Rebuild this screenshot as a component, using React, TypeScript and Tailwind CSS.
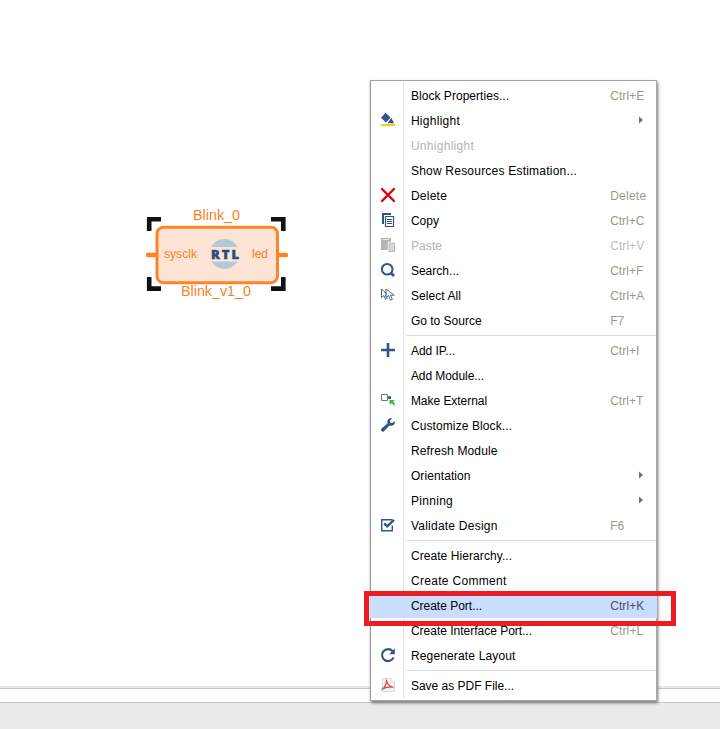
import React from 'react';

type Entry = {
  label: string;
  width: number;
  keys?: string;
  icon?: React.ReactNode;
  submenu?: boolean;
  disabled?: boolean;
  active?: boolean;
};

const navy = '#34528b';

const HighlightIcon = () => (
  <g>
    <path d="M5.5 .8 10.6 5.6 6 10.6 1 5.8Z" fill={navy} />
    <path d="M11.4 5.8 14 11.2 7.6 11.2Z" fill={navy} />
    <path d="M1 13h14" stroke="#ffc90e" strokeWidth="2" />
  </g>
);
const DeleteIcon = () => <path d="M2 2 14 14M14 2 2 14" stroke="#e80000" strokeWidth="2.4" strokeLinecap="round" fill="none" />;
const CopyIcon = () => (
  <g fill="none" stroke={navy}>
    <path d="M3 1v11M2 2h9" strokeWidth="2" />
    <path d="M5.5 4.5h8v10h-8z" fill="#fff" strokeWidth="1.2" />
    <path d="M7 7.5h5M7 9.5h5M7 11.5h5" />
  </g>
);
const PasteIcon = () => (
  <g>
    <path d="M1 1h10v12H1z" fill="#b5b5b5" />
    <path d="M3 2.5h6" stroke="#e9e9e9" />
    <path d="M7.8 4.8h7.2v10H7.8z" fill="#fff" />
    <path d="M9 6h5.5v8.5H9z" fill="#d6d6d6" stroke="#bcbcbc" />
  </g>
);
const SearchIcon = () => (
  <g fill="none" stroke={navy}>
    <circle cx="7.2" cy="7.2" r="5.3" strokeWidth="2" />
    <path d="M11.2 11.2 14 14" strokeWidth="3" />
  </g>
);
const SelectIcon = () => (
  <g fill="#fff" stroke="#4c6796" strokeWidth="1">
    <path d="M1.5 2v8.5l2.4-1.9 1.6 3.7 1.6-.8L5.5 8h2.8Z" />
    <path d="M6 2v8.7l2.5-2.1 2 4.6 1.9-.9-2-4.1h3.8Z" />
    <path d="M4 4.5 7.2 7.6" />
  </g>
);
const PlusIcon = () => <path d="M8 1v14M1 8h14" stroke={navy} strokeWidth="2.6" />;
const ExternalIcon = () => (
  <g>
    <path d="M1.5 2.5h6v6h-6z" fill="none" stroke="#61799f" />
    <path d="M7.5 5.5h1" stroke={navy} />
    <path d="M8.2 4.2h2.8v2.8H8.2z" fill={navy} />
    <path d="M9.5 8h5.2l-1.6 1.7c1.2 1 1.8 2 1.9 4.3-1.1-1.1-2.2-2-3.5-2.7L9.8 13Z" fill="#32b44a" />
  </g>
);
const WrenchIcon = () => (
  <path d="M14.8 4.2 12.2 6.1 10.3 5.6 9.8 3.8 12.3 1.4C9.6.5 7.1 2.3 7.3 5.1L7.5 6.4 1.4 11.6C.1 13.2 2.2 15.8 4 14.2L9.2 8.7C12.5 9.3 15.5 7.7 14.8 4.2Z" fill={navy} />
);
const ValidateIcon = () => (
  <g fill="none" stroke={navy}>
    <path d="M12.3 2.7H1.7v11h10.6V8.5" strokeWidth="1.4" />
    <path d="M4.2 6.4 7.2 9.4 14 2.8" strokeWidth="2.3" />
  </g>
);
const RefreshIcon = () => (
  <g>
    <path d="M12.6 4.2A6 6 0 1 0 13.6 10.4" fill="none" stroke={navy} strokeWidth="2.1" />
    <path d="M14.8 1.6V7.2H9.2Z" fill={navy} />
  </g>
);
const PdfIcon = () => (
  <g>
    <path d="M2.5 1.5h8.5l3.5 3.5v9.5h-12z" fill="#f2f2f2" stroke="#dcdcdc" />
    <path d="M11 1.5V5h3.5" fill="#fff" stroke="#cfcfcf" strokeWidth=".7" />
    <path d="M2 12.6C4.2 10.8 6.4 7.6 6.4 3.2M6.4 3.2C7 6.6 8.6 9.2 13 10.2M2.6 12C5 10.4 8.6 9.6 13 10.2" fill="none" stroke="#dc5454" strokeWidth="1.3" strokeLinecap="round" />
  </g>
);

const groups: Entry[][] = [
  [
    { label: 'Block Properties...', width: 99, keys: 'Ctrl+E' },
    { label: 'Highlight', width: 50, icon: <HighlightIcon />, submenu: true },
    { label: 'Unhighlight', width: 64, disabled: true },
    { label: 'Show Resources Estimation...', width: 167 },
    { label: 'Delete', width: 37, keys: 'Delete', icon: <DeleteIcon /> },
    { label: 'Copy', width: 29, keys: 'Ctrl+C', icon: <CopyIcon /> },
    { label: 'Paste', width: 32, keys: 'Ctrl+V', icon: <PasteIcon />, disabled: true },
    { label: 'Search...', width: 49, keys: 'Ctrl+F', icon: <SearchIcon /> },
    { label: 'Select All', width: 51, keys: 'Ctrl+A', icon: <SelectIcon /> },
    { label: 'Go to Source', width: 71.5, keys: 'F7' },
  ],
  [
    { label: 'Add IP...', width: 45, keys: 'Ctrl+I', icon: <PlusIcon /> },
    { label: 'Add Module...', width: 74, },
    { label: 'Make External', width: 77, keys: 'Ctrl+T', icon: <ExternalIcon /> },
    { label: 'Customize Block...', width: 102, icon: <WrenchIcon /> },
    { label: 'Refresh Module', width: 87.5 },
    { label: 'Orientation', width: 60.5, submenu: true },
    { label: 'Pinning', width: 43, submenu: true },
    { label: 'Validate Design', width: 87.5, keys: 'F6', icon: <ValidateIcon /> },
  ],
  [
    { label: 'Create Hierarchy...', width: 102 },
    { label: 'Create Comment', width: 96.5 },
    { label: 'Create Port...', width: 72, keys: 'Ctrl+K', active: true },
    { label: 'Create Interface Port...', width: 122, keys: 'Ctrl+L' },
    { label: 'Regenerate Layout', width: 105.5, icon: <RefreshIcon /> },
  ],
  [{ label: 'Save as PDF File...', width: 104, icon: <PdfIcon /> }],
];

function Label({ text, width }: { text: string; width: number }) {
  const ref = React.useRef<HTMLSpanElement>(null);
  const [spacing, setSpacing] = React.useState(0);
  React.useLayoutEffect(() => {
    if (ref.current) setSpacing((width - 0.8 - ref.current.getBoundingClientRect().width) / text.length);
  }, [text, width]);
  return (
    <span ref={ref} className="whitespace-pre" style={{ letterSpacing: spacing }}>
      {text}
    </span>
  );
}

const keyWidths: Record<string, number> = { 'Ctrl+I': 30, 'Ctrl+L': 34, 'Ctrl+F': 34, 'Ctrl+T': 34, Delete: 37, F6: 15, F7: 15 };

function Row({ item }: { item: Entry }) {
  const tone = item.disabled ? 'text-[#b4b4b4]' : 'text-black';
  const keyTone = item.active ? 'text-[#4e5260]' : item.disabled ? 'text-[#bcbcbc]' : 'text-[#9a9a8c]';
  return (
    <div className={`flex h-[25px] items-center ${item.active ? '-mx-px bg-[#c9ddfd] px-px' : ''}`}>
      <div className={`flex h-full w-[33px] items-start border-r pl-[9px] pt-1 ${item.active ? 'border-[#c9ddfd]' : 'border-[#e3e3e3]'}`}>
        {item.icon && <svg width="16" height="16" viewBox="0 0 16 16">{item.icon}</svg>}
      </div>
      <div className={`flex w-[199px] pl-[7px] pt-[2px] ${tone}`}><Label text={item.label} width={item.width} /></div>
      <div className={`flex w-[54px] items-center pl-[8px] ${item.keys ? 'pt-[2px]' : ''} ${keyTone}`}>
        {item.keys && <Label text={item.keys} width={keyWidths[item.keys] ?? 35} />}
        {item.submenu && <svg className="mb-px ml-[28px]" width="6" height="8" viewBox="0 0 6 8"><path d="M1 0.5 5 4 1 7.5Z" fill="#707070" /></svg>}
      </div>
    </div>
  );
}

function Block() {
  return (
    <svg className="absolute left-[140px] top-[200px]" width="150" height="105" viewBox="0 0 150 105" fontFamily="Liberation Sans, Arial, sans-serif">
      <path d="M9.2 31V19.2H21M131 19.2h12.3V31M9.2 77v11.6H21M131 88.6h12.3V77" fill="none" stroke="#111" strokeWidth="4.6" />
      <path d="M8 55h9M138 55h8" stroke="#ff8427" strokeWidth="4.5" strokeLinecap="round" />
      <rect x="17" y="27.2" width="120.5" height="55.5" rx="6.5" fill="#fde4d5" stroke="#ff8427" strokeWidth="3" />
      <circle cx="84.5" cy="54" r="15" fill="#b0cad8" />
      <path d="M68 47h33v14.5H68z" fill="#fde4d5" />
      <text x="71" y="58.8" textLength="28" fontSize="13" fontWeight="800" fontFamily="Open Sans, sans-serif" fill="#294b83" stroke="#294b83" strokeWidth=".5">RTL</text>
      <g fill="#fa8128">
        <text x="53" y="20" fontSize="14.4" textLength="47" lengthAdjust="spacingAndGlyphs">Blink_0</text>
        <text x="41" y="96" fontSize="14.4" textLength="70" lengthAdjust="spacingAndGlyphs">Blink_v1_0</text>
        <text x="24" y="58" fontSize="12" textLength="33" lengthAdjust="spacingAndGlyphs">sysclk</text>
        <text x="112" y="58" fontSize="12" textLength="16" lengthAdjust="spacingAndGlyphs">led</text>
      </g>
    </svg>
  );
}

export default function App() {
  return (
    <main className="relative flex h-[729px] w-[720px] flex-col overflow-hidden bg-white">
      <div className="h-[686px]" />
      <div className="h-[3px] border-b border-[#c6c6c6] bg-[#e9e9e9]" />
      <div className="h-[14px] border-b border-[#c8c8c8] bg-white" />
      <div className="flex-1 bg-[#ebebeb]" />
      <Block />
      <nav className="absolute left-[370px] top-[80px] h-[621px] w-[287px] border border-[#a5a5a5] border-l-[#999] bg-white pt-[2px] font-['Liberation_Sans',Arial,sans-serif] text-[12px] leading-[15px] shadow-[1px_2px_3px_#777]">
        {groups.map((group, i) => (
          <section key={i}>
            {i > 0 && (
              <div className="flex h-[5px]">
                <div className="w-[33px] border-r border-[#e3e3e3]" />
                <div className="ml-[2px] mt-[2px] h-px flex-1 bg-[#e0e0e0]" />
              </div>
            )}
            {group.map((item) => <Row key={item.label} item={item} />)}
          </section>
        ))}
      </nav>
      <div className="absolute left-[364px] top-[591px] h-[35px] w-[312px] border-[5px] border-[#ed1c24]" />
    </main>
  );
}
